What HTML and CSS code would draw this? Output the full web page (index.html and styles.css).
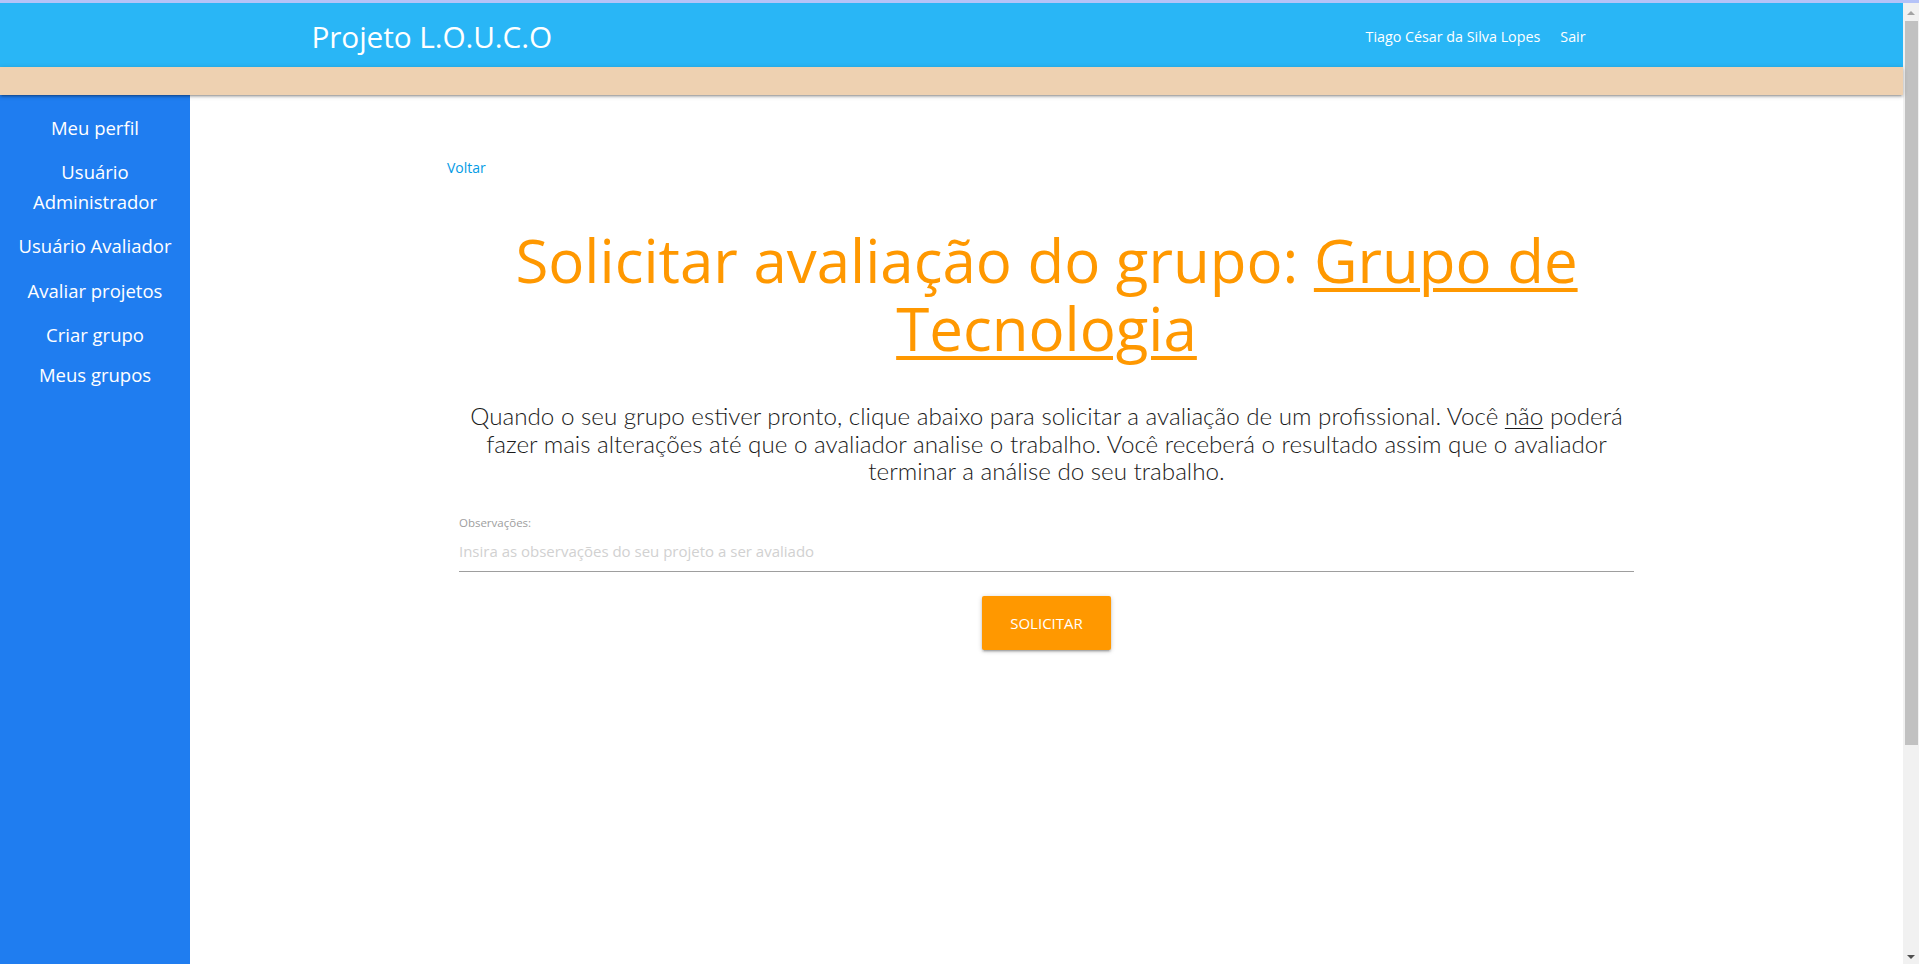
FILE: index.html
```html
<!DOCTYPE html>
<html lang="pt-BR">
<head>
<meta charset="utf-8">
<title>Projeto L.O.U.C.O</title>
<link rel="stylesheet" href="styles.css">
</head>
<body>
<div class="topline"></div>
<div class="frame">
  <div class="page">
    <nav class="navbar">
      <div class="nav-inner">
        <a class="brand" href="#">Projeto L.O.U.C.O</a>
        <ul class="nav-links">
          <li><a href="#">Tiago César da Silva Lopes</a></li>
          <li><a href="#">Sair</a></li>
        </ul>
      </div>
    </nav>
    <div class="band"></div>
    <div class="layout">
      <aside class="sidebar">
        <ul class="side-menu">
          <li><a href="#">Meu perfil</a></li>
          <li><a href="#">Usuário<br>Administrador</a></li>
          <li><a href="#">Usuário Avaliador</a></li>
          <li><a href="#">Avaliar projetos</a></li>
          <li><a href="#">Criar grupo</a></li>
          <li class="tight"><a href="#">Meus grupos</a></li>
        </ul>
      </aside>
      <main class="main">
        <div class="container">
          <a class="back" href="#">Voltar</a>
          <h1 class="title">Solicitar avaliação do grupo: <a href="#">Grupo de Tecnologia</a></h1>
          <p class="lead">Quando o seu grupo estiver pronto, clique abaixo para solicitar a avaliação de um profissional. Você <u>não</u> poderá fazer mais alterações até que o avaliador analise o trabalho. Você receberá o resultado assim que o avaliador terminar a análise do seu trabalho.</p>
          <div class="field">
            <label for="obs">Observações:</label>
            <input id="obs" type="text" placeholder="Insira as observações do seu projeto a ser avaliado">
          </div>
          <div class="actions">
            <button class="btn" type="button">SOLICITAR</button>
          </div>
        </div>
      </main>
    </div>
  </div>
  <div class="scrollbar">
    <div class="arrow up"></div>
    <div class="thumb"></div>
    <div class="track"></div>
    <div class="arrow down"></div>
  </div>
</div>
</body>
</html>
```

FILE: styles.css
```css
* { box-sizing: border-box; }
html, body { margin: 0; padding: 0; height: 100%; overflow: hidden; }
body {
  font-family: "Open Sans", "Noto Sans", sans-serif;
  color: rgba(0,0,0,0.87);
  background: #fff;
}
a { text-decoration: none; }
ul { list-style: none; margin: 0; padding: 0; }

.topline { height: 3px; background: #b5c3f8; }
.frame { display: flex; height: 961px; }
.page { flex: 1; display: flex; flex-direction: column; min-width: 0; }

.navbar { height: 64px; background: #29b6f6; flex: none; }
.nav-inner {
  width: 70%; margin: 0 auto; height: 100%;
  display: flex; align-items: center; justify-content: space-between;
  padding: 4px 22px 0 26px;
}
.brand { color: #fff; font-size: 29.8px; line-height: 40px; letter-spacing: -0.1px; }
.nav-links { display: flex; }
.nav-links a { color: #fff; font-size: 14.3px; padding: 0 10px; line-height: 40px; display: block; }

.band {
  height: 28px; background: #eed1b1; flex: none;
  position: relative; z-index: 1;
  box-shadow: 0 2px 2px 0 rgba(0,0,0,.14), 0 3px 1px -2px rgba(0,0,0,.12), 0 1px 5px 0 rgba(0,0,0,.2);
}

.layout { flex: 1; display: flex; min-height: 0; }
.sidebar { width: 190px; flex: none; background: #1f7df0; padding-top: 10px; }
.side-menu li { padding: 7.5px 4px; text-align: center; }
.side-menu li.tight { padding-top: 3px; }
.side-menu a { color: #fff; font-size: 18.5px; line-height: 29.5px; display: block; }

.main { flex: 1; min-width: 0; }
.container { width: 70%; margin: 0 auto; padding-top: 62px; text-align: center; }
.back { display: block; text-align: left; color: #039be5; font-size: 14px; line-height: 21px; }

.title {
  font-weight: 400; color: #ff9800;
  font-size: 60px; line-height: 68px;
  margin: 48px 0 40px;
}
.title a {
  color: #ff9800; text-decoration: underline;
  text-decoration-thickness: 4px; text-underline-offset: 5px;
}

.lead {
  font-family: "Lato", "Open Sans", sans-serif;
  font-weight: 300; font-size: 24.2px; line-height: 27.5px;
  margin: 0 0 30px; color: #1a1a1a;
}
.lead u { text-decoration-thickness: 1px; text-underline-offset: 3px; }

.field { padding: 0 12px; text-align: left; }
.field label { display: block; font-size: 11.5px; line-height: 16px; color: #9e9e9e; }
.field input {
  display: block; width: 100%; height: 41px;
  border: none; border-bottom: 1px solid #9e9e9e;
  outline: none; background: transparent; padding: 0;
  font-family: inherit; font-size: 15px; color: rgba(0,0,0,.87);
}
.field input::placeholder { color: #d1d1d1; }

.actions { display: flex; justify-content: center; margin-top: 24px; }
.btn {
  height: 54px; padding: 0 28px;
  background: #ff9800; color: #fff; border: none; border-radius: 2px;
  font-family: inherit; font-size: 15px; letter-spacing: 0;
  box-shadow: 0 2px 2px 0 rgba(0,0,0,.14), 0 3px 1px -2px rgba(0,0,0,.12), 0 1px 5px 0 rgba(0,0,0,.2);
  cursor: pointer;
}

.scrollbar { width: 16px; flex: none; background: #f1f1f1; display: flex; flex-direction: column; align-items: center; }
.arrow { width: 0; height: 0; border-left: 4px solid transparent; border-right: 4px solid transparent; flex: none; }
.arrow.up { border-bottom: 4px solid #a3a3a3; margin: 8px 0 6px; }
.thumb { width: 13px; margin-left: 1px; height: 724px; background: #c1c1c1; flex: none; }
.track { flex: 1; }
.arrow.down { border-top: 4px solid #505050; margin: 0 0 5px; }
```
